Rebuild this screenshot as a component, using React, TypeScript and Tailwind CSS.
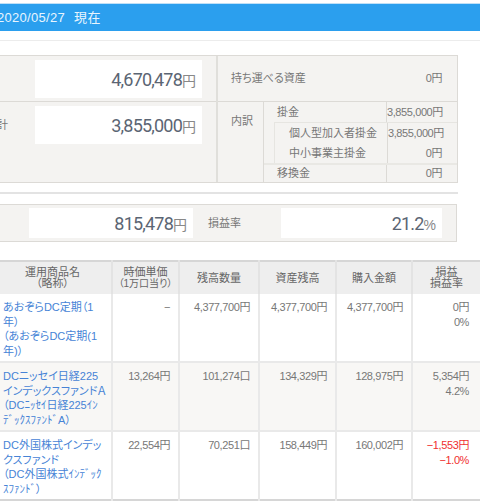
const cellBase = 'border-r-2 border-[#e9e9e9] last:border-r-0 align-top pt-[6px] pr-[8px] text-right text-[11px] leading-[15px] tracking-[-0.4px] text-[#777]'
const headBase = 'border-r-2 border-[#e3e3e3] last:border-r-0 align-middle text-center text-[11px] leading-[11px] font-normal text-[#666]'

const rows = [
  {
    name: ['あおぞらDC定期（1', '年）', '（あおぞらDC定期(1', '年)）'],
    price: '−',
    qty: '4,377,700円',
    balance: '4,377,700円',
    cost: '4,377,700円',
    gain: '0円',
    rate: '0%',
    loss: false,
    bg: 'bg-white',
    h: 'h-[68px]',
  },
  {
    name: ['DCニッセイ日経225', 'インデックスファンドＡ', '（DCﾆｯｾｲ日経225ｲﾝ', 'ﾃﾞｯｸｽﾌｧﾝﾄﾞA）'],
    price: '13,264円',
    qty: '101,274口',
    balance: '134,329円',
    cost: '128,975円',
    gain: '5,354円',
    rate: '4.2%',
    loss: false,
    bg: 'bg-[#f8f7f5]',
    h: 'h-[69px]',
  },
  {
    name: ['DC外国株式インデッ', 'クスファンド', '（DC外国株式ｲﾝﾃﾞｯｸ', 'ｽﾌｧﾝﾄﾞ）'],
    price: '22,554円',
    qty: '70,251口',
    balance: '158,449円',
    cost: '160,002円',
    gain: '−1,553円',
    rate: '−1.0%',
    loss: true,
    bg: 'bg-white',
    h: 'h-[69px]',
  },
]

function Amount({ value, unit }: { value: string; unit: string }) {
  return (
    <span className="text-[#5b6573]">
      <span className="font-['Roboto',sans-serif] text-[18px] tracking-[-0.8px]">{value}</span>
      <span className="text-[14px] text-[#888]">{unit}</span>
    </span>
  )
}

export default function App() {
  return (
    <div className="w-[480px] h-[501px] overflow-hidden bg-white font-['Liberation_Sans','Noto_Sans_CJK_JP',sans-serif] [font-feature-settings:'palt'] text-[#777]">
      {/* page title bar */}
      <div className="mt-[3px] h-[28px] border-t border-[#bfe0f7] bg-[#2b9fee] flex items-center -ml-[3px] text-[13px] text-[#e8f5fe] tracking-[0.3px]">
        2020/05/27<span className="ml-[9px]">現在</span>
      </div>
      <div className="mt-[9px] h-[1px] bg-[#ececec]" />

      {/* total assets */}
      <div className="mt-[14px] w-[458px] h-[128px] flex border-y border-r border-[#dcdad6] bg-[#f4f3f1]">
        <div className="w-[218px] border-r-2 border-[#e0dfdb] shrink-0">
          <div className="h-[46px] border-b border-[#dcdad6] pt-[4px] pl-[35px]">
            <div className="w-[167px] h-[38px] bg-white flex items-center justify-end pr-[6px]">
              <Amount value="4,670,478" unit="円" />
            </div>
          </div>
          <div className="relative pt-[4px] pl-[35px]">
            <span className="absolute -left-[14px] top-[15px] text-[11px]">累計</span>
            <div className="w-[167px] h-[38px] bg-white flex items-center justify-end pr-[6px]">
              <Amount value="3,855,000" unit="円" />
            </div>
          </div>
        </div>
        <div className="flex-1 text-[11px]">
          <div className="h-[46px] border-b border-[#dcdad6] flex items-center justify-between pl-[13px] pr-[15px]">
            <span>持ち運べる資産</span>
            <span className="tracking-[-0.4px]">0円</span>
          </div>
          <div className="flex h-[80px]">
            <div className="w-[46px] pl-[13px] pt-[11px] border-r border-[#dcdad6]">内訳</div>
            <div className="flex-1">
              <div className="h-[20px] flex items-center">
                <span className="pl-[13px] w-[123px] border-r border-[#dcdad6] h-full flex items-center">掛金</span>
                <span className="flex-1 tracking-[-0.4px]">3,855,000円</span>
              </div>
              <div className="ml-[10px] border-t border-l border-[#e6e5e1]">
                <div className="h-[20px] flex items-center">
                  <span className="pl-[14px] w-[113px] border-r border-[#dcdad6] h-full flex items-center">個人型加入者掛金</span>
                  <span className="flex-1 tracking-[-0.4px]">3,855,000円</span>
                </div>
                <div className="h-[20px] flex items-center">
                  <span className="pl-[14px] w-[113px] border-r border-[#dcdad6] h-full flex items-center">中小事業主掛金</span>
                  <span className="flex-1 text-right pr-[15px] tracking-[-0.4px]">0円</span>
                </div>
              </div>
              <div className="h-[19px] flex items-center border-t-2 border-[#e9e8e4]">
                <span className="pl-[13px] w-[123px] border-r border-[#dcdad6] h-full flex items-center">移換金</span>
                <span className="flex-1 text-right pr-[15px] tracking-[-0.4px]">0円</span>
              </div>
            </div>
          </div>
        </div>
      </div>
      <div className="mt-[9px] w-[458px] h-[2px] bg-[#e3e3e3]" />

      {/* profit and loss */}
      <div className="mt-[10px] w-[457px] h-[38px] flex items-center border-y border-r border-[#dcdad6] bg-[#f4f3f1]">
        <div className="ml-[29px] w-[164px] h-[30px] bg-white flex items-center justify-end pr-[6px]">
          <Amount value="815,478" unit="円" />
        </div>
        <span className="ml-[15px] w-[73px] text-[11px]">損益率</span>
        <div className="w-[161px] h-[30px] bg-white flex items-center justify-end pr-[6px]">
          <Amount value="21.2" unit="%" />
        </div>
      </div>

      {/* holdings */}
      <table className="mt-[18px] -ml-[6px] w-[486px] table-fixed border-collapse border-y-2 border-[#d6d6d6]">
        <colgroup>
          <col className="w-[118px]" />
          <col className="w-[67px]" />
          <col className="w-[80px]" />
          <col className="w-[77px]" />
          <col className="w-[76px]" />
          <col className="w-[68px]" />
        </colgroup>
        <thead>
          <tr className="h-[33px] bg-[#eeeeee]">
            <th className={headBase}>運用商品名<br />（略称）</th>
            <th className={headBase}>時価単価<br /><span className="text-[10px]">（1万口当り）</span></th>
            <th className={headBase}>残高数量</th>
            <th className={headBase}>資産残高</th>
            <th className={headBase}>購入金額</th>
            <th className={headBase}>損益<br />損益率</th>
          </tr>
        </thead>
        <tbody>
          {rows.map((r) => (
            <tr key={r.qty} className={`${r.h} ${r.bg} border-t-2 border-[#e9e9e9] first:border-t-0`}>
              <td className="border-r-2 border-[#e9e9e9] align-top pt-[6px] pl-[9px] text-[11px] leading-[14.5px] text-[#4683d6] whitespace-nowrap overflow-hidden">
                {r.name.map((line) => (
                  <div key={line}>{line}</div>
                ))}
              </td>
              <td className={cellBase}>{r.price}</td>
              <td className={cellBase}>{r.qty}</td>
              <td className={cellBase}>{r.balance}</td>
              <td className={cellBase}>{r.cost}</td>
              <td className={`${cellBase} pr-[11px]`}>
                <div className={r.loss ? 'text-[#f02f2f]' : ''}>{r.gain}</div>
                <div className={r.loss ? 'text-[#f02f2f]' : ''}>{r.rate}</div>
              </td>
            </tr>
          ))}
        </tbody>
      </table>
    </div>
  )
}
